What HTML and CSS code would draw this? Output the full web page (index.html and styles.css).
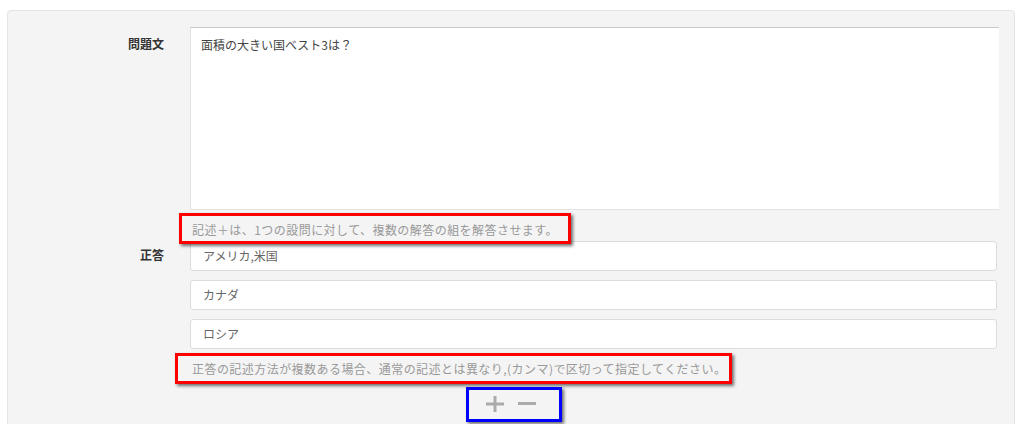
FILE: index.html
```html
<!DOCTYPE html>
<html lang="ja">
<head>
    <meta charset="UTF-8">
    <meta name="viewport" content="width=device-width, initial-scale=1.0">
    <title>設問編集</title>
    <link rel="stylesheet" href="styles.css">
</head>
<body>
    <div class="panel">
        <div class="row">
            <div class="label">問題文</div>
            <div class="field">
                <div class="textarea">面積の大きい国ベスト3は？</div>
                <p class="hint"><span class="note">記述＋は、1つの設問に対して、複数の解答の組を解答させます。</span></p>
            </div>
        </div>

        <div class="row">
            <div class="label label-answer">正答</div>
            <div class="field">
                <div class="answers">
                    <div class="answer">アメリカ,米国</div>
                    <div class="answer">カナダ</div>
                    <div class="answer">ロシア</div>
                </div>
                <p class="hint hint-answer"><span class="note note-wide">正答の記述方法が複数ある場合、通常の記述とは異なり,(カンマ)で区切って指定してください。</span></p>
            </div>
        </div>

        <div class="controls">
            <div class="buttons">
                <span class="btn" title="追加">
                    <svg width="18" height="16" viewBox="0 0 18 16"><path d="M0 8h18M9 0v16" stroke="#ababab" stroke-width="3"/></svg>
                </span>
                <span class="btn" title="削除">
                    <svg width="18" height="16" viewBox="0 0 18 16"><path d="M0 7.5h18" stroke="#ababab" stroke-width="3"/></svg>
                </span>
            </div>
        </div>
    </div>
</body>
</html>
```

FILE: styles.css
```css
* {
    margin: 0;
    padding: 0;
    box-sizing: border-box;
}

body {
    font-family: 'Noto Sans CJK JP', 'Noto Sans', sans-serif;
    font-size: 12px;
    background-color: #fff;
    color: #444;
}

.panel {
    margin: 10px 9px 0 7px;
    height: 430px;
    padding: 16px 15px 0 0;
    background-color: #f4f4f4;
    border: 1px solid #e4e4e4;
    border-radius: 4px;
}

.row {
    display: flex;
}

.label {
    width: 182px;
    flex-shrink: 0;
    padding: 9px 26px 0 0;
    text-align: right;
    font-weight: 700;
    line-height: 16px;
    color: #333;
}

.label-answer {
    padding-top: 6px;
}

.field {
    flex: 1;
}

.textarea {
    height: 183px;
    padding: 9px 10px;
    line-height: 16px;
    background-color: #fff;
    border: 1px solid #e2e2e2;
    border-top-color: #c8c8c8;
    border-right: none;
    color: #444;
}

.hint {
    padding: 12px 0 3px 2px;
    line-height: 16px;
    color: #999;
    letter-spacing: 0.45px;
}

.hint-answer {
    padding-top: 12px;
}

/* 注釈の枠 */
.note {
    position: relative;
    display: inline-block;
}

.note::after {
    content: "";
    position: absolute;
    top: -9px;
    bottom: -6px;
    left: -13px;
    right: -13px;
    border: 3px solid #f00;
    box-shadow: 2px 2px 3px rgba(0, 0, 0, 0.55);
}

.note-wide::after {
    top: -8px;
    bottom: -7px;
    left: -17px;
    right: -6px;
}

.answers {
    display: flex;
    flex-direction: column;
    gap: 9px;
    margin-right: 2px;
}

.answer {
    height: 30px;
    padding: 0 12px;
    line-height: 28px;
    background-color: #fff;
    border: 1px solid #dcdcdc;
    border-radius: 3px;
    color: #666;
}

.controls {
    display: flex;
    justify-content: center;
    padding: 16px 0 0 15px;
}

.buttons {
    position: relative;
    display: flex;
    gap: 14px;
}

.buttons::after {
    content: "";
    position: absolute;
    top: -9px;
    bottom: -10px;
    left: -20px;
    right: -26px;
    border: 3px solid #00f;
    box-shadow: 2px 2px 3px rgba(0, 0, 0, 0.55);
}

.btn {
    display: block;
    height: 16px;
    cursor: pointer;
}

.btn svg {
    display: block;
}
```
